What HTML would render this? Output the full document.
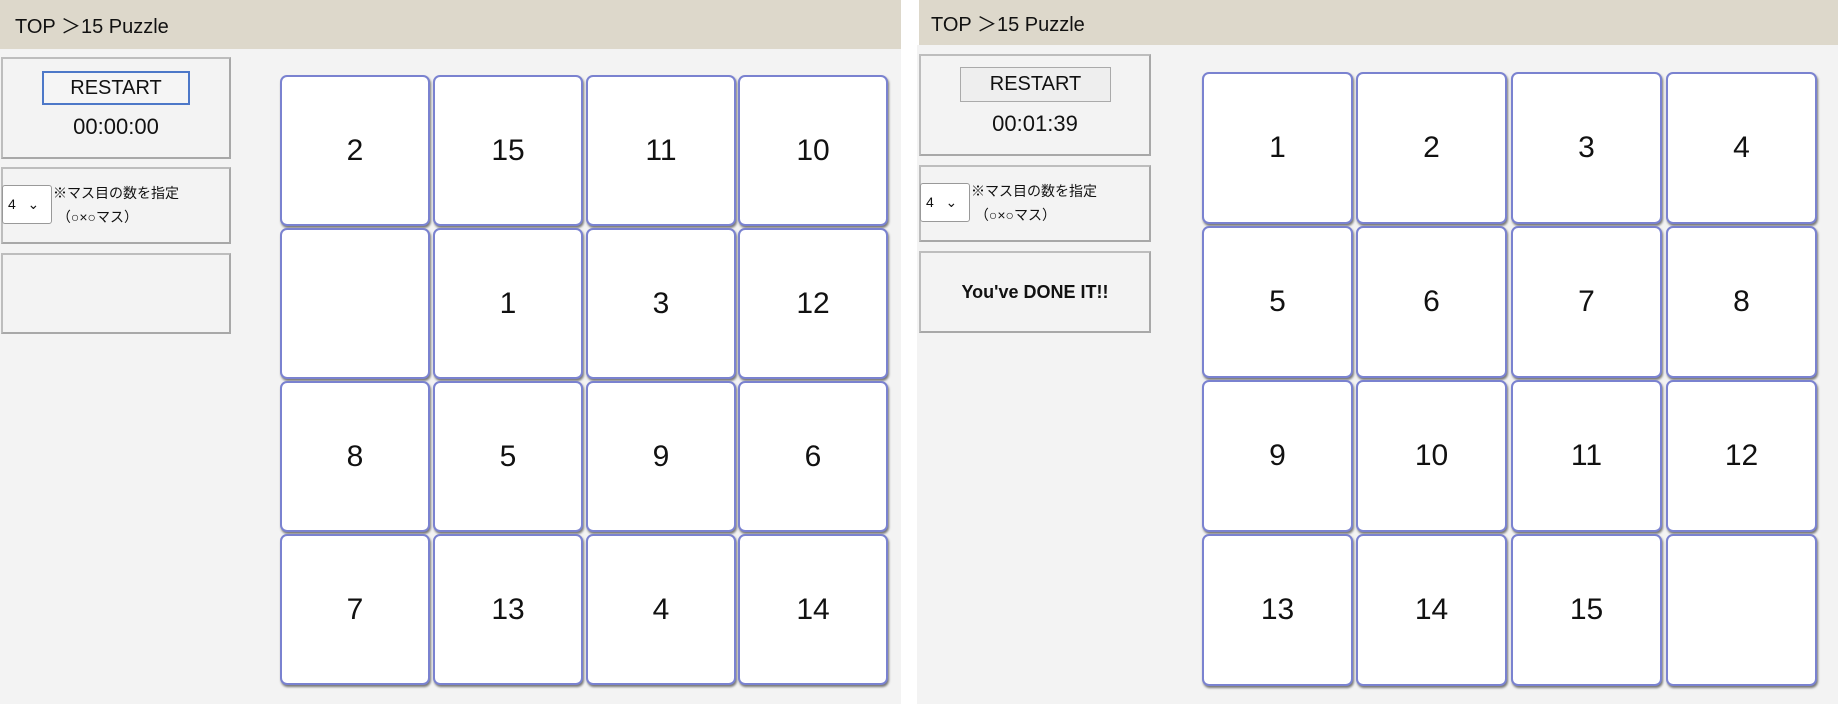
<!DOCTYPE html>
<html><head><meta charset="utf-8"><style>
*{margin:0;padding:0;box-sizing:border-box}
body{width:1838px;height:704px;background:#fff;position:relative;overflow:hidden;font-family:"Liberation Sans","Noto Sans CJK JP",sans-serif;color:#111}
.a{position:absolute}
.hd{background:#ddd8cb;font-size:20px;padding-left:15px;display:flex;align-items:center}
.bg{background:#f3f3f3}
.box{border:2px solid #bdbdbd;background:#f3f3f3;border-right-color:#a8a8a8;border-bottom-color:#a8a8a8}
.btn{font-size:20px;display:flex;align-items:center;justify-content:center}
.tm{font-size:22px;text-align:center}
.sel{background:#fff;border:1px solid #999;border-radius:3px;font-size:14px;padding-left:5px;display:flex;align-items:center}
.note{font-size:14px;line-height:24px}
.t{background:#fff;border:2px solid #7a82d0;border-radius:7px;box-shadow:1px 2px 2px #777;display:flex;align-items:center;justify-content:center;font-size:30px}
</style></head><body>
<!-- left -->
<div class="a hd" style="left:0;top:0;width:901px;height:49px">TOP ＞15 Puzzle</div>
<div class="a bg" style="left:0;top:49px;width:901px;height:655px"></div>
<div class="a box" style="left:1px;top:57px;width:230px;height:102px"></div>
<div class="a btn" style="left:42px;top:71px;width:148px;height:34px;border:2px solid #4d78c8;background:#f5f5f5">RESTART</div>
<div class="a tm" style="left:1px;top:114px;width:230px">00:00:00</div>
<div class="a box" style="left:1px;top:167px;width:230px;height:77px"></div>
<div class="a sel" style="left:2px;top:185px;width:50px;height:39px">4&nbsp;&nbsp;&nbsp;&#8964;</div>
<div class="a note" style="left:53px;top:181px">※マス目の数を指定<br>&nbsp;（○×○マス）</div>
<div class="a box" style="left:1px;top:253px;width:230px;height:81px"></div>
<!-- right -->
<div class="a hd" style="left:919px;top:0;width:919px;height:45px;padding-left:12px">TOP ＞15 Puzzle</div>
<div class="a bg" style="left:917px;top:45px;width:921px;height:659px"></div>
<div class="a box" style="left:919px;top:54px;width:232px;height:102px"></div>
<div class="a btn" style="left:960px;top:67px;width:151px;height:35px;border:1px solid #aaa;background:#eee">RESTART</div>
<div class="a tm" style="left:919px;top:111px;width:232px">00:01:39</div>
<div class="a box" style="left:919px;top:165px;width:232px;height:77px"></div>
<div class="a sel" style="left:920px;top:183px;width:50px;height:39px">4&nbsp;&nbsp;&nbsp;&#8964;</div>
<div class="a note" style="left:971px;top:179px">※マス目の数を指定<br>&nbsp;（○×○マス）</div>
<div class="a box" style="left:919px;top:251px;width:232px;height:82px;display:flex;align-items:center;justify-content:center;font-weight:bold;font-size:18px">You've DONE IT!!</div>
<div id="g"></div>
<script>
function grid(xs,ys,w,h,nums){let s='';let k=0;for(const y of ys)for(const x of xs){const n=nums[k++];s+=`<div class="a t" style="left:${x}px;top:${y}px;width:${w}px;height:${h}px">${n}</div>`;}return s;}
document.getElementById('g').innerHTML=
grid([280,433,586,738],[75,228,381,534],150,151,[2,15,11,10,'',1,3,12,8,5,9,6,7,13,4,14])+
grid([1202,1356,1511,1666],[72,226,380,534],151,152,[1,2,3,4,5,6,7,8,9,10,11,12,13,14,15,'']);
</script>
</body></html>
